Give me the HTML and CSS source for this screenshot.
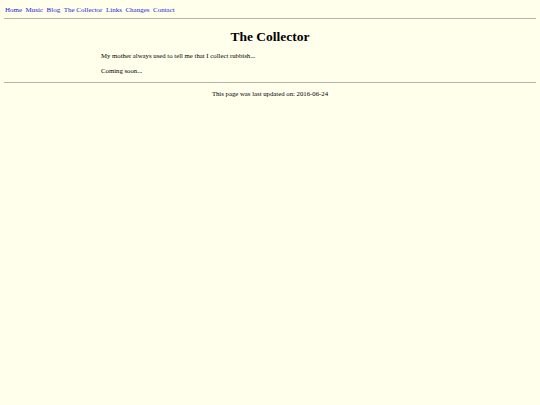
FILE: index.html
```html
<!DOCTYPE html>
<html>
<head>
<meta charset="utf-8">
<title>The Collector</title>
<link rel="stylesheet" href="styles.css">
</head>
<body>
<nav class="nav">
<a href="#">Home</a>
<a href="#">Music</a>
<a href="#">Blog</a>
<a href="#">The Collector</a>
<a href="#">Links</a>
<a href="#">Changes</a>
<a href="#">Contact</a>
</nav>
<hr class="rule rule-top">
<main class="content">
<h1 class="title">The Collector</h1>
<p class="para">My mother always used to tell me that I collect rubbish...</p>
<p class="para">Coming soon...</p>
</main>
<hr class="rule rule-bottom">
<p class="footer">This page was last updated on: 2016-06-24</p>
</body>
</html>
```
FILE: styles.css
```css
html { background: #ffffec; }
body {
  margin: 0 4px;
  padding-top: 5px;
  font-family: "Liberation Serif", "Times New Roman", serif;
  font-size: 6.75px;
  line-height: 8px;
  color: #000;
  background: #ffffec;
}
.nav {
  display: flex;
  gap: 3.5px;
  padding: 1px 0 0 1px;
  font-size: 7px;
}
.nav a { color: #1c1cd8; text-decoration: none; }
.rule {
  border: none;
  border-top: 1px solid #b4b4ac;
  height: 0;
}
.rule-top { margin: 4px 0 0 0; }
.content { width: 338px; margin: 0 auto; }
.title {
  font-size: 13.5px;
  line-height: 15px;
  text-align: center;
  margin: 10px 0 8px;
}
.para { margin: 0 0 7px; }
.rule-bottom { margin: 0; }
.footer { text-align: center; margin: 7px 0; }
```
